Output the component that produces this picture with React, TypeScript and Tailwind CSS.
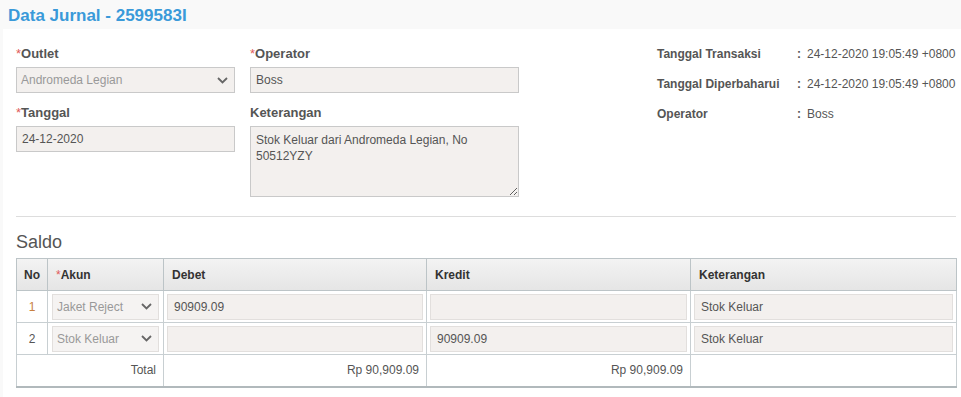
import React from 'react';

function Chevron() {
  return (
    <svg width="11" height="7" viewBox="0 0 11 7" className="shrink-0">
      <polyline points="1,1 5.5,5.5 10,1" fill="none" stroke="#666" strokeWidth="1.8" />
    </svg>
  );
}

function Label({ text, required }: { text: string; required?: boolean }) {
  return (
    <div className="mb-[5px] h-[16px] text-[13px] font-bold leading-[16px] text-[#555]">
      {required && <span className="font-normal text-[#e05a5a]">*</span>}
      {text}
    </div>
  );
}

function CellInput({ value }: { value?: string }) {
  return (
    <div className="flex h-[26px] items-center border border-[#e2dfdd] bg-[#f3f0ee] px-[6px] text-[12px] text-[#555]">
      {value}
    </div>
  );
}

function CellSelect({ value }: { value: string }) {
  return (
    <div className="flex h-[26px] items-center justify-between border border-[#e2dfdd] bg-[#f5f3f2] pl-[4px] pr-[6px] text-[12px] text-[#999]">
      <span>{value}</span>
      <Chevron />
    </div>
  );
}

export default function App() {
  const rows = [
    { no: '1', akun: 'Jaket Reject', debet: '90909.09', kredit: '', ket: 'Stok Keluar' },
    { no: '2', akun: 'Stok Keluar', debet: '', kredit: '90909.09', ket: 'Stok Keluar' },
  ];

  return (
    <div className="min-h-screen bg-[#f9f9f9] font-['Liberation_Sans',Arial,sans-serif]">
      {/* Title */}
      <div className="h-[29px] pl-[8px] pt-[6px]">
        <h1 className="text-[17px] font-bold leading-[20px] text-[#3a9ad9]">Data Jurnal - 2599583I</h1>
      </div>

      <div className="ml-[3px] bg-white pb-[10px] pl-[13px] pr-[5px] pt-[17px]">
        {/* Form */}
        <div className="flex">
          <div className="w-[219px]">
            <Label text="Outlet" required />
            <div className="flex h-[26px] items-center justify-between border border-[#c9c9c9] bg-[#f3f0ee] pl-[4px] pr-[6px] text-[12px] text-[#999]">
              <span>Andromeda Legian</span>
              <Chevron />
            </div>
            <div className="mt-[12px]">
              <Label text="Tanggal" required />
              <div className="flex h-[26px] items-center border border-[#c9c9c9] bg-[#f3f0ee] px-[5px] text-[12px] text-[#555]">
                24-12-2020
              </div>
            </div>
          </div>

          <div className="ml-[15px] w-[269px]">
            <Label text="Operator" required />
            <div className="flex h-[26px] items-center border border-[#c9c9c9] bg-[#f3f0ee] px-[5px] text-[12px] text-[#555]">
              Boss
            </div>
            <div className="mt-[12px]">
              <Label text="Keterangan" />
              <textarea
                readOnly
                value="Stok Keluar dari Andromeda Legian, No 50512YZY"
                className="block h-[71px] w-full border border-[#c9c9c9] bg-[#f3f0ee] px-[5px] py-[5px] text-[12px] leading-[16px] text-[#555] outline-none"
              />
            </div>
          </div>

          <div className="-mt-[1px] ml-[138px] text-[12px] text-[#555]">
            <div className="flex h-[30px] items-start">
              <span className="w-[140px] font-bold">Tanggal Transaksi</span>
              <span className="w-[10px] font-bold">:</span>
              <span>24-12-2020 19:05:49 +0800</span>
            </div>
            <div className="flex h-[30px] items-start">
              <span className="w-[140px] font-bold">Tanggal Diperbaharui</span>
              <span className="w-[10px] font-bold">:</span>
              <span>24-12-2020 19:05:49 +0800</span>
            </div>
            <div className="flex h-[30px] items-start">
              <span className="w-[140px] font-bold">Operator</span>
              <span className="w-[10px] font-bold">:</span>
              <span>Boss</span>
            </div>
          </div>
        </div>

        <div className="mt-[19px] h-px w-[940px] bg-[#dddddd]" />

        {/* Saldo */}
        <h2 className="mb-[6px] mt-[15px] text-[18px] leading-[20px] text-[#555]">Saldo</h2>

        <table className="w-[940px] table-fixed border-collapse border-b-2 border-b-[#b1b9bc] text-[12px] text-[#555]">
          <colgroup>
            <col className="w-[31px]" />
            <col className="w-[116px]" />
            <col className="w-[263px]" />
            <col className="w-[264px]" />
            <col className="w-[266px]" />
          </colgroup>
          <thead>
            <tr className="h-[32px] bg-gradient-to-b from-[#f3f3f3] to-[#e5e5e5] text-left font-bold text-[#333]">
              <th className="border border-[#bcc4c7] text-center">No</th>
              <th className="border border-[#bcc4c7] px-[8px]">
                <span className="font-normal text-[#e05a5a]">*</span>Akun
              </th>
              <th className="border border-[#bcc4c7] px-[8px]">Debet</th>
              <th className="border border-[#bcc4c7] px-[8px]">Kredit</th>
              <th className="border border-[#bcc4c7] px-[8px]">Keterangan</th>
            </tr>
          </thead>
          <tbody>
            {rows.map((r) => (
              <tr key={r.no} className="h-[32px]">
                <td className={`border border-[#c8cfd2] text-center ${r.no === '1' ? 'text-[#c8803f]' : 'text-[#555]'}`}>
                  {r.no}
                </td>
                <td className="border border-[#c8cfd2] px-[4px] py-[2px]">
                  <CellSelect value={r.akun} />
                </td>
                <td className="border border-[#c8cfd2] px-[3px] py-[2px]">
                  <CellInput value={r.debet} />
                </td>
                <td className="border border-[#c8cfd2] px-[3px] py-[2px]">
                  <CellInput value={r.kredit} />
                </td>
                <td className="border border-[#c8cfd2] px-[3px] py-[2px]">
                  <CellInput value={r.ket} />
                </td>
              </tr>
            ))}
            <tr className="h-[32px]">
              <td colSpan={2} className="border border-[#c8cfd2] px-[7px] text-right">Total</td>
              <td className="border border-[#c8cfd2] px-[7px] text-right">Rp 90,909.09</td>
              <td className="border border-[#c8cfd2] px-[7px] text-right">Rp 90,909.09</td>
              <td className="border border-[#c8cfd2]" />
            </tr>
          </tbody>
        </table>
      </div>
    </div>
  );
}
